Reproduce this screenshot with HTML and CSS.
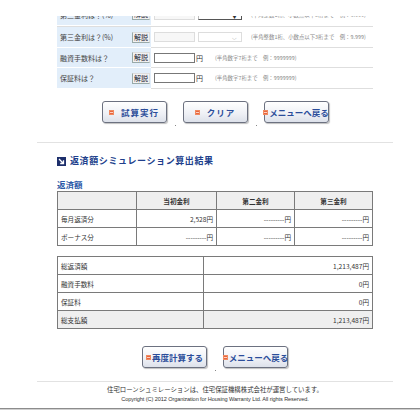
FILE: index.html
```html
<!DOCTYPE html>
<html lang="ja">
<head>
<meta charset="utf-8">
<title>返済額シミュレーション</title>
<link rel="stylesheet" href="styles.css">
</head>
<body>
<div class="page">
  <div class="top-space"></div>
  <div class="inner">
    <div class="form">
      <div class="frow cut">
        <div class="lab"><span>第二金利は？(%)</span><span class="exp">解説</span></div>
        <div class="fld">
          <span class="inp dis"></span><span class="sel on"><i>▼</i></span>
          <span class="hint">(半角整数1桁、小数点以下3桁まで　例：9.999)</span>
        </div>
      </div>
      <div class="frow h21">
        <div class="lab"><span>第三金利は？(%)</span><span class="exp">解説</span></div>
        <div class="fld">
          <span class="inp dis"></span><span class="sel"><i class="lt">⌵</i></span>
          <span class="hint">(半角整数1桁、小数点以下3桁まで　例：9.999)</span>
        </div>
      </div>
      <div class="frow h20">
        <div class="lab"><span>融資手数料は？</span><span class="exp">解説</span></div>
        <div class="fld">
          <span class="inp"></span><span class="yen">円</span>
          <span class="hint h2">(半角数字7桁まで　例：9999999)</span>
        </div>
      </div>
      <div class="frow h21">
        <div class="lab"><span>保証料は？</span><span class="exp">解説</span></div>
        <div class="fld">
          <span class="inp"></span><span class="yen">円</span>
          <span class="hint h2">(半角数字7桁まで　例：9999999)</span>
        </div>
      </div>
    </div>
  </div>

  <div class="btns b1">
    <span class="btn"><b class="ico"></b><span class="wide">試算実行</span></span>
    <span class="dot"></span>
    <span class="btn"><b class="ico"></b><span class="wide">クリア</span></span>
    <span class="dot"></span>
    <span class="btn"><b class="ico"></b>メニューへ戻る</span>
  </div>

  <div class="rule r1"></div>

  <div class="inner">
    <h2 class="ttl"><svg class="ticon" width="9" height="9" viewBox="0 0 9 9"><rect width="9" height="9" fill="#1d2f6b"/><path d="M2 2 L6.2 6.2 M6.5 3.2 V6.5 H3.2" stroke="#fff" stroke-width="1.3" fill="none"/></svg>返済額シミュレーション算出結果</h2>
    <div class="sub">返済額</div>
    <table class="t1">
      <tr class="hd"><th></th><th>当初金利</th><th>第二金利</th><th>第三金利</th></tr>
      <tr><td class="l">毎月返済分</td><td>2,528円</td><td>---------円</td><td>---------円</td></tr>
      <tr><td class="l">ボーナス分</td><td>---------円</td><td>---------円</td><td>---------円</td></tr>
    </table>
    <table class="t2">
      <tr><td class="l">総返済額</td><td>1,213,487円</td></tr>
      <tr><td class="l">融資手数料</td><td>0円</td></tr>
      <tr><td class="l">保証料</td><td>0円</td></tr>
      <tr class="gr"><td class="l">総支払額</td><td>1,213,487円</td></tr>
    </table>
  </div>

  <div class="btns b2">
    <span class="btn"><b class="ico"></b>再度計算する</span>
    <span class="dot"></span>
    <span class="btn"><b class="ico"></b>メニューへ戻る</span>
  </div>

  <div class="rule r2"></div>
  <div class="foot">
    <p class="fj">住宅ローンシュミレーションは、住宅保証機構株式会社が運営しています。</p>
    <p class="fe">Copyright (C) 2012 Organization for Housing Warranty Ltd. All rights Reserved.</p>
  </div>
</div>
<div class="bottom-line"></div>
</body>
</html>
```
FILE: styles.css
```css
html, body { margin: 0; padding: 0; background: #fff; }
body {
  font-family: "Noto Sans CJK JP", "Noto Sans", sans-serif;
  color: #333;
  width: 420px;
  height: 420px;
  overflow: hidden;
}
.page { width: 356px; margin-left: 37px; }
.top-space { height: 16px; }
.inner { padding: 0 20px; }

.form { display: flex; flex-direction: column; }
.frow { display: flex; border-bottom: 1px solid #dedede; box-sizing: border-box; }
.frow.cut { height: 11px; overflow: hidden; align-items: flex-end; }
.frow.h21 { height: 21px; }
.frow.h20 { height: 20px; }
.lab {
  width: 94px; flex: none;
  background: #e2eefa;
  display: flex; align-items: center; justify-content: space-between;
  padding: 0 0 0 3px; box-sizing: border-box;
  font-size: 7px; color: #444;
  border-bottom: 1px solid #fff; margin-bottom: -1px;
}
.frow.cut .lab, .frow.cut .fld { height: 22px; flex: none; margin-bottom: 0; }
.exp {
  font-size: 7px; line-height: 9px; color: #223;
  border: 1px solid #9aa; border-top-color: #ddd; border-right-color: #ddd;
  background: #f2f2f2; padding: 0 1px; margin-right: 1px;
}
.fld { flex: 1; display: flex; align-items: center; padding-left: 3px; }
.inp {
  width: 41px; height: 10px; box-sizing: border-box;
  border: 1px solid #777; background: #fff; flex: none;
}
.inp.dis { border-color: #ddd; background: #f7f7f7; }
.sel {
  width: 44px; height: 10px; box-sizing: border-box; margin-left: 3px;
  border: 1px solid #ddd; background: #fff; flex: none;
  display: flex; align-items: center; justify-content: flex-end; padding-right: 4px;
}
.sel.on { border-color: #bbb; border-right-color: #555; border-bottom-color: #555; }
.sel i { font-style: normal; font-size: 5px; color: #333; }
.sel i.lt { font-size: 6px; color: #999; }
.yen { font-size: 7px; color: #333; margin-left: 1px; }
.hint { font-size: 5.4px; color: #8a8a8a; margin-left: 9px; white-space: nowrap; }
.hint.h2 { margin-left: 12px; }

.btns { display: flex; justify-content: center; align-items: flex-start; }
.b1 { margin-top: 12px; gap: 0; }
.b2 { margin-top: 17px; }
.btn {
  width: 65px; height: 22px; box-sizing: border-box;
  border: 1px solid #6c7180; border-radius: 3px;
  background: linear-gradient(#ffffff, #eef0f5 60%, #dde1ea);
  box-shadow: 1px 1px 1px rgba(0,0,0,0.25);
  display: flex; align-items: center; justify-content: center;
  font-size: 8.5px; font-weight: bold; color: #2b4d9a; white-space: nowrap;
}
.btn .wide { letter-spacing: 1px; margin-left: 6px; }
.ico {
  width: 5px; height: 5px; background: #e8663f; margin-right: 1px;
  box-shadow: inset 0 0 0 1px #f08a60;
  position: relative; flex: none;
}
.ico::after { content: ""; position: absolute; left: 1px; top: 2px; width: 3px; height: 1px; background: #fbd0c0; }
.dot { width: 16px; height: 24px; position: relative; }
.dot::after { content: ""; position: absolute; left: 8px; bottom: -1px; width: 1px; height: 1px; background: #888; }

.rule { height: 1px; background: #e2e2e2; }
.r1 { margin-top: 17px; }
.r2 { margin-top: 11px; }

.ttl {
  margin: 13px 0 0; font-size: 9px; line-height: 10px; font-weight: bold;
  color: #213f8c; letter-spacing: 0.6px;
  display: flex; align-items: center;
}
.ticon { margin-right: 4px; flex: none; }
.sub { margin-top: 12px; font-size: 8.5px; line-height: 12px; color: #2d5aa8; font-weight: bold; }

table { border-collapse: collapse; width: 316px; table-layout: fixed; font-size: 6.6px; color: #333; }
td, th { border: 1px solid #7a7a7a; height: 18px; padding: 0 3px; box-sizing: border-box; text-align: right; }
.t1 { margin-top: 1px; border: 1.5px solid #666; }
.t1 th { background: #efefef; text-align: center; font-weight: bold; }
.t1 th:nth-child(1) { width: 79px; }
.t1 th:nth-child(2) { width: 80px; }
.t1 th:nth-child(3) { width: 78px; }
td.l { text-align: left; }
.t2 { margin-top: 10px; border: 1.5px solid #666; }
.t2 td:first-child { width: 146px; }
.t2 tr.gr td { background: #efefef; }

.foot { text-align: center; padding-top: 3px; }
.foot p { margin: 0; }
.fj { font-size: 6.4px; line-height: 10px; color: #333; }
.fe { font-family: "Liberation Sans", Arial, sans-serif; font-size: 5.6px; line-height: 9px; color: #333; letter-spacing: -0.1px; }
.bottom-line { height: 1px; background: #8c8c8c; margin-top: 4px; border-bottom: 1px solid #d0d0d0; }
```
